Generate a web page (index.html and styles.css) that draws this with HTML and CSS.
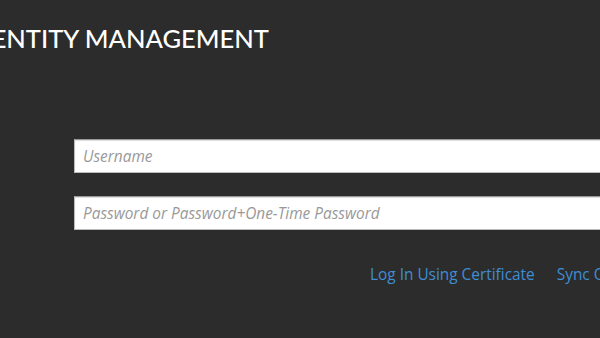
FILE: index.html
```html
<!DOCTYPE html>
<html>
<head>
    <meta charset="utf-8">
    <title>Identity Management</title>
    <link rel="stylesheet" href="styles.css">
</head>
<body>
<div class="page">
    <h1 class="brand">IDENTITY MANAGEMENT</h1>
    <form class="login">
        <input class="field" type="text" placeholder="Username">
        <input class="field" type="password" placeholder="Password or Password+One-Time Password">
        <div class="links">
            <a href="#">Log In Using Certificate</a>
            <a href="#">Sync OTP Token</a>
        </div>
    </form>
</div>
</body>
</html>
```

FILE: styles.css
```css
html {
    background: #2c2c2c;
}

body {
    margin: 0;
    font-family: "Open Sans", sans-serif;
    overflow: hidden;
}

.page {
    width: 900px;
}

.brand {
    margin: 24px 0 0 -35px;
    font-family: Lato, sans-serif;
    font-weight: 500;
    font-size: 25.5px;
    letter-spacing: 0;
    line-height: 28px;
    color: #fff;
}

.login {
    display: flex;
    flex-direction: column;
    gap: 23px;
    margin: 87px 0 0 74px;
}

.field {
    box-sizing: border-box;
    width: 700px;
    height: 34px;
    padding: 0 8px;
    border: 1px solid #bbb;
    border-top-color: #999;
    box-shadow: inset 0 1px 1px #0002;
    background: #fff;
    font-family: "Open Sans", sans-serif;
    font-size: 15.4px;
}

.field::placeholder {
    font-style: italic;
    color: #999;
}

.links {
    display: flex;
    gap: 22px;
    margin: 11px 0 0 296px;
    font-size: 15.4px;
}

.links a {
    color: #3f8ed4;
    text-decoration: none;
    white-space: nowrap;
}
```
